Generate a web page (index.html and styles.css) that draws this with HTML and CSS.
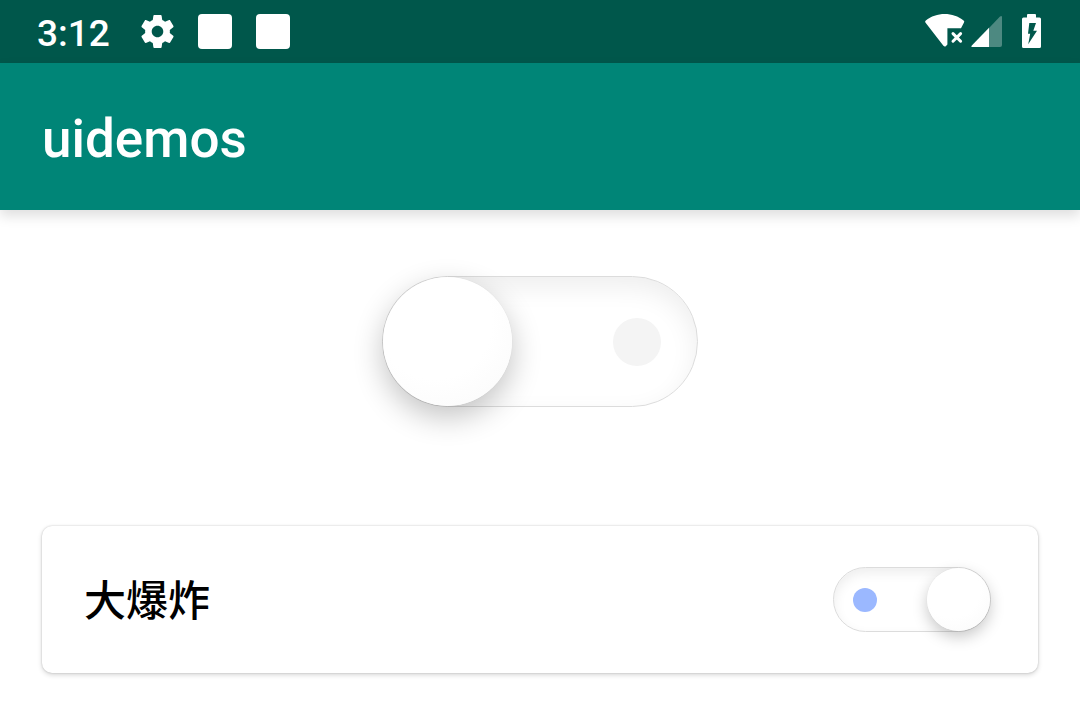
FILE: index.html
```html
<!DOCTYPE html>
<html lang="zh">
<head>
    <meta charset="UTF-8">
    <meta name="viewport" content="width=device-width, initial-scale=1.0">
    <title>uidemos</title>
    <link rel="stylesheet" href="styles.css">
</head>
<body>
    <div class="status-bar">
        <span class="clock">3:12</span>
        <svg class="gear" viewBox="2 2 20 20" width="33" height="33">
            <path fill="#fff" d="M19.43 12.98c.04-.32.07-.64.07-.98s-.03-.66-.07-.98l2.11-1.65c.19-.15.24-.42.12-.64l-2-3.46c-.12-.22-.39-.3-.61-.22l-2.49 1c-.52-.4-1.08-.73-1.69-.98l-.38-2.65C14.46 2.18 14.25 2 14 2h-4c-.25 0-.46.18-.49.42l-.38 2.65c-.61.25-1.17.59-1.69.98l-2.49-1c-.23-.09-.49 0-.61.22l-2 3.46c-.13.22-.07.49.12.64l2.11 1.65c-.04.32-.07.65-.07.98s.03.66.07.98l-2.11 1.65c-.19.15-.24.42-.12.64l2 3.46c.12.22.39.3.61.22l2.49-1c.52.4 1.08.73 1.69.98l.38 2.65c.03.24.24.42.49.42h4c.25 0 .46-.18.49-.42l.38-2.65c.61-.25 1.17-.59 1.69-.98l2.49 1c.23.09.49 0 .61-.22l2-3.46c.12-.22.07-.49-.12-.64l-2.11-1.65zM12 15.5c-1.93 0-3.5-1.57-3.5-3.5s1.57-3.5 3.5-3.5 3.5 1.57 3.5 3.5-1.57 3.5-3.5 3.5z"/>
        </svg>
        <span class="notice"></span>
        <span class="notice"></span>
        <div class="system-icons">
            <svg viewBox="0 0 42 36" width="42" height="36">
                <path fill="#fff" d="M1.4 9.6Q0.6 8.4 1.8 7.5C7 3.2 13.8 1 20.7 1S34.4 3.2 39.6 7.5Q40.8 8.4 40 9.6L37 15.3H23.4V31.4L22 32.9Q20.7 34 19.4 32.7Z"/>
                <path fill="none" stroke="#fff" stroke-width="3" stroke-linecap="round" d="M29 20.6l7.6 7.6M36.6 20.6l-7.6 7.6"/>
            </svg>
            <svg viewBox="0 0 36 36" width="36" height="36">
                <path fill="#fff" fill-opacity=".3" d="M19 15L30 3.6Q31.8 2 32 4V32Q32 34 30 34H19Z"/>
                <path fill="#fff" d="M19 14.8V34H2.6Q.6 34 1.8 32.4Z"/>
            </svg>
            <svg class="battery" viewBox="0 0 21 36" width="21" height="36">
                <path fill="#fff" fill-rule="evenodd" d="M6 4.5V2Q6 1 7 1H14Q15 1 15 2V4.5H18.5Q20 4.5 20 6V33.5Q20 35 18.5 35H2.5Q1 35 1 33.5V6Q1 4.5 2.5 4.5ZM8.3 10L7 20.7H9.2L7.2 31.3L16 17.7H12.3L15 10Z"/>
            </svg>
        </div>
    </div>

    <header class="app-bar">
        <h1>uidemos</h1>
    </header>

    <main>
        <input type="checkbox" class="switch switch-large" aria-label="switch">

        <div class="card">
            <label for="bigbang">大爆炸</label>
            <input type="checkbox" class="switch" id="bigbang" checked>
        </div>
    </main>
</body>
</html>
```
FILE: styles.css
```css
* {
    box-sizing: border-box;
}

body {
    margin: 0;
    background-color: #fff;
    font-family: Roboto, "Noto Sans CJK SC", sans-serif;
}

.status-bar {
    display: flex;
    align-items: center;
    height: 63px;
    padding: 0 38px 1px 37px;
    background-color: #00574b;
    color: #fff;
}

.clock {
    margin-right: 31px;
    padding-top: 6px;
    font-size: 37px;
    font-weight: 500;
    line-height: 40px;
}

.notice {
    width: 34px;
    height: 35px;
    margin-left: 24px;
    border-radius: 4px;
    background-color: #fff;
}

.system-icons {
    display: flex;
    align-items: center;
    gap: 4px;
    margin-left: auto;
}

.battery {
    margin-left: 11px;
}

.app-bar {
    display: flex;
    align-items: center;
    height: 147px;
    padding: 4px 42px 0;
    background-color: #008577;
    color: #fff;
    box-shadow: 0 6px 12px rgba(0, 0, 0, 0.13);
}

.app-bar h1 {
    margin: 0;
    font-size: 53px;
    font-weight: 500;
}

main {
    display: flex;
    flex-direction: column;
    align-items: center;
    padding: 66px 42px 42px;
}

/* --size is the knob diameter */
.switch {
    --size: 63px;
    appearance: none;
    display: flex;
    align-items: center;
    justify-content: space-between;
    width: 158px;
    height: 65px;
    margin: 0;
    border: 1px solid #dcdcdc;
    border-radius: 66px;
    background-color: #fff;
    box-shadow: inset 0 5px 12px rgba(0, 0, 0, 0.07);
}

.switch::before {
    content: '';
    width: var(--size);
    height: var(--size);
    border-radius: 50%;
    background-image: radial-gradient(circle at 40% 35%, #fff 50%, #f9f9f9 100%);
    box-shadow: 0 0 1px rgba(0, 0, 0, 0.12), 0 6px 15px rgba(0, 0, 0, 0.22);
}

.switch::after {
    content: '';
    width: 24px;
    height: 24px;
    margin: 0 19px;
    border-radius: 50%;
    background-color: #f4f4f4;
}

.switch:checked {
    flex-direction: row-reverse;
}

.switch:checked::after {
    background-color: #9bb8ff;
}

.switch-large {
    --size: 129px;
    width: 316px;
    height: 131px;
    box-shadow: inset 0 10px 26px rgba(0, 0, 0, 0.07);
}

.switch-large::before {
    box-shadow: 0 0 1px rgba(0, 0, 0, 0.12), 0 11px 30px rgba(0, 0, 0, 0.24);
}

.switch-large::after {
    width: 48px;
    height: 48px;
    margin: 0 36px;
}

.card {
    display: flex;
    align-items: center;
    justify-content: space-between;
    width: 100%;
    margin-top: 119px;
    padding: 41px 47px 41px 42px;
    border-radius: 10px;
    background-color: #fff;
    box-shadow: 0 0 2px rgba(0, 0, 0, 0.2), 0 2px 5px rgba(0, 0, 0, 0.16);
}

.card label {
    padding-top: 4px;
    font-size: 42px;
    font-weight: 500;
    line-height: 60px;
    color: #000;
}
```
